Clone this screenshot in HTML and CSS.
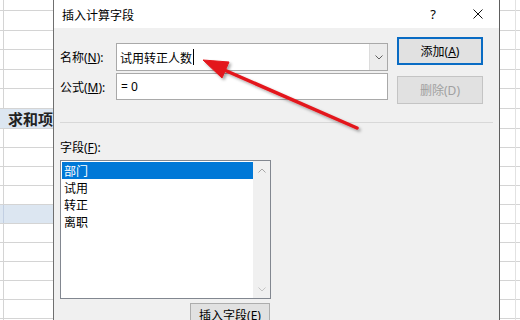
FILE: index.html
```html
<!DOCTYPE html>
<html lang="zh-CN">
<head>
  <meta charset="utf-8" />
  <title>插入计算字段</title>
  <link rel="stylesheet" href="styles.css">
</head>
<body>
  <div class="screen">
    <div class="sheet sheet-left">
      <div class="row first"><span class="cell"></span></div>
      <div class="row tall"><span class="cell"></span></div>
      <div class="row"><span class="cell"></span></div>
      <div class="row tall"><span class="cell"></span></div>
      <div class="row"><span class="cell"></span></div>
      <div class="row tall"><span class="cell"></span></div>
      <div class="row tall header"><span class="head-text">求和项:</span></div>
      <div class="row"><span class="cell"></span></div>
      <div class="row"><span class="cell"></span></div>
      <div class="row"><span class="cell"></span></div>
      <div class="row"><span class="cell"></span></div>
      <div class="row marked"><span class="cell"></span></div>
      <div class="row"><span class="cell"></span></div>
      <div class="row"><span class="cell"></span></div>
      <div class="row"><span class="cell"></span></div>
      <div class="row"><span class="cell"></span></div>
      <div class="row"><span class="cell"></span></div>
      <div class="row"><span class="cell"></span></div>
    </div>

    <div class="dialog">
      <div class="titlebar">
        <span class="title">插入计算字段</span>
        <span class="help">?</span>
        <svg class="close" width="10" height="10" viewBox="0 0 10 10">
          <path d="M0.5 0.5 L9.5 9.5 M9.5 0.5 L0.5 9.5" stroke="#111" stroke-width="1" fill="none"/>
        </svg>
      </div>

      <div class="body">
        <div class="top">
          <div class="fields">
            <label class="lbl">名称(<u>N</u>):</label>
            <div class="combo">
              <span class="value">试用转正人数</span><span class="caret"></span>
              <span class="drop">
                <svg width="8" height="5" viewBox="0 0 8 5">
                  <path d="M0.5 0.5 L4 4 L7.5 0.5" stroke="#606060" stroke-width="1" fill="none"/>
                </svg>
              </span>
            </div>
            <label class="lbl">公式(<u>M</u>):</label>
            <div class="input">= 0</div>
          </div>
          <div class="buttons">
            <button class="btn btn-default">添加(<u>A</u>)</button>
            <button class="btn" disabled>删除(D)</button>
          </div>
        </div>

        <div class="sep"></div>

        <div class="field-label">字段(<u>F</u>):</div>
        <div class="field-box">
          <div class="listbox">
            <ul class="items">
              <li class="selected">部门</li>
              <li>试用</li>
              <li>转正</li>
              <li>离职</li>
            </ul>
            <div class="scrollbar">
              <svg width="8" height="5" viewBox="0 0 8 5">
                <path d="M0.5 4.5 L4 1 L7.5 4.5" stroke="#a6a6a6" stroke-width="1" fill="none"/>
              </svg>
              <svg width="8" height="5" viewBox="0 0 8 5">
                <path d="M0.5 0.5 L4 4 L7.5 0.5" stroke="#c4c4c4" stroke-width="1" fill="none"/>
              </svg>
            </div>
          </div>
          <div class="insert-row">
            <button class="btn btn-insert">插入字段(<u>E</u>)</button>
          </div>
        </div>
      </div>
    </div>

    <div class="sheet sheet-right">
      <div class="row first"></div>
      <div class="row tall"></div>
      <div class="row"></div>
      <div class="row tall"></div>
      <div class="row"></div>
      <div class="row tall"></div>
      <div class="row tall"></div>
      <div class="row"></div>
      <div class="row"></div>
      <div class="row"></div>
      <div class="row"></div>
      <div class="row"></div>
      <div class="row"></div>
      <div class="row"></div>
      <div class="row"></div>
      <div class="row"></div>
      <div class="row"></div>
      <div class="row"></div>
    </div>

    <svg class="arrow" width="520" height="320" viewBox="0 0 520 320">
      <defs>
        <filter id="shadow" x="-20%" y="-20%" width="140%" height="140%">
          <feDropShadow dx="2" dy="2" stdDeviation="1.5" flood-color="#000" flood-opacity="0.35"/>
        </filter>
      </defs>
      <g filter="url(#shadow)" fill="#e3161b" stroke="#e3161b">
        <line x1="357" y1="128" x2="222" y2="69" stroke-width="3.5" stroke-linecap="round"/>
        <polygon points="203,60 229,62 222,78" stroke-width="1" stroke-linejoin="round"/>
      </g>
    </svg>
  </div>
</body>
</html>
```

FILE: styles.css
```css
body {
  margin: 0;
  background-color: #fff;
  font-family: "Noto Sans", "Noto Sans CJK SC", sans-serif;
  font-size: 12px;
  color: #000;
}

.screen {
  position: relative;
  display: flex;
  width: 520px;
  height: 320px;
  overflow: hidden;
}

/* spreadsheet behind the dialog */
.sheet {
  flex: none;
  background-color: #fff;
}

.sheet-left {
  width: 53px;
}

.sheet-right {
  width: 20px;
  position: relative;
}

.sheet-right::after {
  content: "";
  position: absolute;
  top: 0;
  bottom: 0;
  left: 15px;
  border-left: 1px solid #e2e2e2;
}

.row {
  box-sizing: border-box;
  display: flex;
  height: 19px;
  border-bottom: 1px solid #d4d4d4;
}

.row.first {
  height: 11px;
}

.row.tall {
  height: 20px;
}

.cell {
  width: 3px;
  border-right: 1px solid #d4d4d4;
}

.row.header,
.row.marked {
  background-color: #dce6f1;
}

.row.marked .cell {
  border-right-color: #c2cfe2;
}

.head-text {
  padding-left: 8px;
  font-family: "Noto Sans CJK SC", sans-serif;
  font-size: 15px;
  font-weight: 600;
  line-height: 19px;
  color: #222;
  white-space: nowrap;
}

/* dialog */
.dialog {
  flex: none;
  display: flex;
  flex-direction: column;
  width: 447px;
  box-sizing: border-box;
  border-left: 1px solid #6f6f6f;
  border-right: 1px solid #5e5e5e;
  background-color: #f0f0f0;
}

.titlebar {
  flex: none;
  display: flex;
  align-items: center;
  height: 28px;
  padding: 0 16px 0 8px;
  background-color: #fff;
}

.title {
  flex: 1;
  font-family: "Noto Sans CJK SC", sans-serif;
}

.help {
  width: 10px;
  margin-right: 35px;
  text-align: center;
  font-size: 13px;
}

.body {
  flex: none;
  padding: 9px 6px 0 6px;
}

.top {
  display: flex;
}

.fields {
  display: grid;
  grid-template-columns: 56px 272px;
  grid-template-rows: 28px 27px;
  row-gap: 2px;
  align-items: center;
  margin-top: 6px;
}

.lbl {
  white-space: nowrap;
}

.combo,
.input {
  box-sizing: border-box;
  display: flex;
  align-items: center;
  height: 100%;
  border: 1px solid #a9a9a9;
  background-color: #fff;
  padding-left: 3px;
}

.combo .value {
  font-family: "Noto Sans CJK SC", sans-serif;
}

.caret {
  width: 1px;
  height: 16px;
  margin-left: 1px;
  background-color: #000;
}

.drop {
  display: flex;
  align-items: center;
  justify-content: center;
  width: 17px;
  height: 100%;
  margin-left: auto;
  background-color: #ececec;
  border-left: 1px solid #dcdcdc;
}

.input {
  padding-left: 4px;
}

.buttons {
  display: flex;
  flex-direction: column;
  gap: 11px;
  margin-left: 9px;
}

.btn {
  box-sizing: border-box;
  width: 86px;
  height: 28px;
  padding: 0;
  border: 1px solid #adadad;
  background-color: #e1e1e1;
  font-family: "Noto Sans", "Noto Sans CJK SC", sans-serif;
  font-size: 12px;
  color: #000;
}

.btn-default {
  border: 2px solid #0a6cc4;
}

.btn:disabled {
  border-color: #c4c4c4;
  background-color: #e1e1e1;
  color: #a0a0a0;
}

.sep {
  height: 1px;
  margin-top: 18px;
  background-color: #d8d8d8;
}

.field-label {
  margin-top: 18px;
  line-height: 14px;
}

.field-box {
  width: 211px;
  margin-top: 5px;
}

.listbox {
  display: flex;
  box-sizing: border-box;
  height: 139px;
  border: 1px solid #828790;
  background-color: #fff;
}

.items {
  flex: 1;
  margin: 0;
  padding: 1px 0 0 1px;
  list-style: none;
  font-family: "Noto Sans CJK SC", sans-serif;
}

.items li {
  height: 17px;
  line-height: 17px;
  padding-left: 2px;
}

.items li.selected {
  background-color: #0078d7;
  color: #fff;
}

.scrollbar {
  display: flex;
  flex-direction: column;
  justify-content: space-between;
  align-items: center;
  width: 17px;
  padding: 7px 0 6px;
  box-sizing: border-box;
  background-color: #f0f0f0;
}

.insert-row {
  display: flex;
  justify-content: flex-end;
  margin-top: 4px;
}

.btn-insert {
  width: 80px;
  height: 24px;
  margin-right: 1px;
}

.arrow {
  position: absolute;
  left: 0;
  top: 0;
  pointer-events: none;
}
```
